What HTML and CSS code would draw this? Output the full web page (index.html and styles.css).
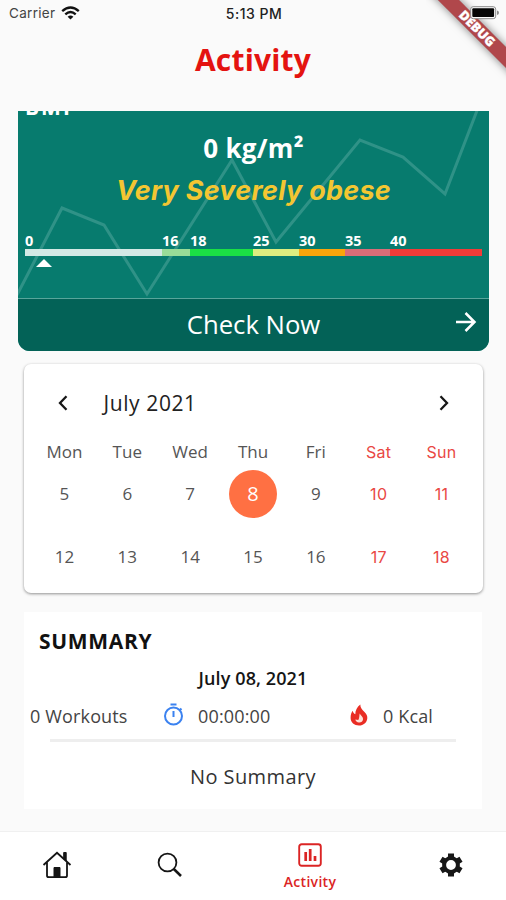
FILE: index.html
```html
<!DOCTYPE html>
<html lang="en">
<head>
<meta charset="utf-8">
<title>Activity</title>
<link rel="stylesheet" href="styles.css">
</head>
<body>
<div class="corner"><div class="debug"><span>DEBUG</span></div></div>
<header class="status">
  <div class="carrier"><span>Carrier</span>
    <svg width="19" height="14" viewBox="0 0 19 14" fill="none" stroke="#111" stroke-width="2.4"><path d="M1.2 5.1Q9.5-2.2 17.8 5.1M4.3 8.3Q9.500 3.800 14.700 8.300"/><path d="M9.500 13.500L6.600 10.700Q9.500 8.300 12.400 10.700Z" fill="#111" stroke="none"/></svg>
  </div>
  <time class="clock">5:13 PM</time>
  <svg class="battery" width="29" height="14" viewBox="0 0 29 14"><rect x=".7" y=".7" width="25" height="12" rx="2.500" fill="#fafafa" stroke="#8b8b8b"/><rect x="2.300" y="2.300" width="21.800" height="8.800" rx="1" fill="#050505"/><path d="M27 4.500q2 .5 2 2.200t-2 2.200z" fill="#8b8b8b"/></svg>
</header>
<h1 class="title"><span>Activity</span></h1>
<main class="content">
  <section class="bmi">
    <svg class="trend" width="471" height="187" viewBox="0 0 471 187" fill="none" stroke="#2f9287" stroke-width="3"><path d="M-1 184L44 97L86 114L129 183L214 49L258 131L342 29L385 46L427 83L460-3"/></svg>
    <div class="bmi-body">
      <div class="bmi-label">BMI</div>
      <div class="bmi-value"><span>0 kg/m²</span></div>
      <div class="bmi-class"><span>Very Severely obese</span></div>
      <div class="scale">
        <div class="seg s0"><b>0</b></div><div class="seg s16"><b>16</b></div><div class="seg s18"><b>18</b></div><div class="seg s25"><b>25</b></div><div class="seg s30"><b>30</b></div><div class="seg s35"><b>35</b></div><div class="seg s40"><b>40</b></div>
      </div>
      <div class="pointer"></div>
    </div>
    <div class="check"><span>Check Now</span>
      <svg class="arrow" width="22" height="22" viewBox="0 0 22 22" fill="none" stroke="#fff" stroke-width="2.500"><path d="M1 11H19.500M10.500 2L19.500 11L10.500 20"/></svg>
    </div>
  </section>
  <section class="calendar">
    <div class="cal-head">
      <svg width="10" height="16" viewBox="0 0 10 16" fill="none" stroke="#171717" stroke-width="2.300"><path d="M8.500 1.300L2 8L8.500 14.700"/></svg>
      <div class="month"><span>July 2021</span></div>
      <svg width="10" height="16" viewBox="0 0 10 16" fill="none" stroke="#171717" stroke-width="2.300"><path d="M1.500 1.300L8 8L1.500 14.700"/></svg>
    </div>
    <div class="week names"><span>Mon</span><span>Tue</span><span>Wed</span><span>Thu</span><span>Fri</span><span class="red">Sat</span><span class="red">Sun</span></div>
    <div class="week first"><span>5</span><span>6</span><span>7</span><span class="today">8</span><span>9</span><span class="red">10</span><span class="red">11</span></div>
    <div class="week second"><span>12</span><span>13</span><span>14</span><span>15</span><span>16</span><span class="red">17</span><span class="red">18</span></div>
  </section>
  <section class="summary">
    <h2><span>SUMMARY</span></h2>
    <div class="date"><span>July 08, 2021</span></div>
    <div class="stats">
      <span class="workouts">0 Workouts</span>
      <svg class="watch" width="21" height="23" viewBox="0 0 21 23" fill="none" stroke="#3b82f0" stroke-width="2"><circle cx="10.500" cy="13" r="8.500"/><path d="M7.500 1.500H13.500M10.500 8V14M17 5.500L18.500 7"/></svg>
      <span class="time">00:00:00</span>
      <svg class="fire" width="18" height="22" viewBox="0 0 18 22"><path d="M10.300.5C10.300 4 12 5.400 14.500 8C16.500 10.200 17.500 12 17.300 14.200C17 18.500 13.500 21.500 9 21.500C4.300 21.500.6 18.400.6 14C.6 11 1.400 8.500 2.600 6.800C3.200 8.800 4 9.900 5.300 10.300C5.300 6.500 7 3 10.300.5Z" fill="#e92d24"/><path d="M9.700 9.200C10 11.200 13.400 12.200 13 15.500C12.700 17.500 11.200 18.500 9 18.400C7 18.300 5.600 17.200 5.400 15.500L8.300 15.900C9.500 14.300 9.200 11.300 9.700 9.200Z" fill="#ffe1d8"/></svg>
      <span class="kcal">0 Kcal</span>
    </div>
    <hr>
    <div class="empty"><span>No Summary</span></div>
  </section>
</main>
<nav class="tabs">
  <svg class="home" width="30" height="28" viewBox="0 0 30 28" fill="none" stroke="#151515" stroke-width="1.800"><path d="M1.500 14L15 1.800L28.500 14M5 11V24.500Q5 26.200 6.700 26.200H23.300Q25 26.200 25 24.500V11"/><path d="M21.700 1.500H24.200V10L21.700 8Z" fill="#151515" stroke-width="1"/><path d="M12 16.500H18V26H12Z" fill="#151515" stroke-width="1"/></svg>
  <svg class="search" width="26" height="26" viewBox="0 0 26 26" fill="none" stroke="#151515"><circle cx="10.500" cy="10.500" r="8.900" stroke-width="1.800"/><path d="M16.800 17L24 24" stroke-width="2.500"/></svg>
  <div class="active">
    <svg width="24" height="24" viewBox="0 0 24 24" fill="none" stroke="#db2424"><rect x="1.200" y="1.200" width="21.600" height="21.600" rx="2.500" stroke-width="1.900"/><path d="M7.700 9V18M12.200 6V18M17 13V18" stroke-width="2.700"/></svg>
    <span>Activity</span>
  </div>
  <svg class="gear" width="24" height="24" viewBox="0 0 24 24" fill="none" stroke="#171717"><circle cx="12" cy="12" r="6.900" stroke-width="4"/><path d="M12 .5V5M12 19V23.500M2 6.200L6 8.600M18 15.400L22 17.800M2 17.800L6 15.400M18 8.600L22 6.200" stroke-width="6"/></svg>
</nav>
</body>
</html>
```
FILE: styles.css
```css
* { box-sizing: border-box; }
body { margin: 0; width: 506px; height: 900px; overflow: hidden; position: relative; display: flex; flex-direction: column; background: #fafafa; color: #222; font-family: "Open Sans", "Noto Sans", sans-serif; white-space: nowrap; }
svg { display: block; flex: none; }
.status { height: 26px; display: grid; grid-template-columns: 1fr auto 1fr; align-items: center; padding: 0 7px 0 9px; font: 13.5px Inter, sans-serif; }
.carrier { display: flex; align-items: center; gap: 6px; color: #444; letter-spacing: .3px; }
.clock { font-weight: 500; font-size: 14px; color: #222; letter-spacing: .5px; }
.battery { justify-self: end; position: relative; z-index: 3; }
.corner { position: absolute; z-index: 2; top: 0; right: 0; width: 80px; height: 80px; overflow: hidden; }
.debug { position: absolute; width: 160px; height: 15px; left: -29px; top: 21px; transform: rotate(45deg); background: #b0474b; box-shadow: 0 0 8px rgba(0,0,0,.5); color: #fff; font: 800 13px/15px "Open Sans", sans-serif; text-align: center; -webkit-text-stroke: .3px #fff; }
.title { margin: 0; height: 85px; padding-top: 13px; text-align: center; color: #e41310; font-weight: 700; font-size: 30px; line-height: 42px; letter-spacing: .2px; }
.content { height: 720px; display: flex; flex-direction: column; }
.bmi { position: relative; flex: none; height: 240px; margin: 0 17px 0 18px; overflow: hidden; border-radius: 0 0 12px 12px; background: #077b6e; color: #fff; }
.trend { position: absolute; left: 0; top: 0; }
.bmi-body { position: relative; display: flow-root; height: 187px; padding: 0 7px; }
.bmi-label { height: 19px; font-weight: 700; font-size: 21px; line-height: 20px; margin-top: -14px; letter-spacing: 2px; }
.bmi-value { height: 42px; padding-top: 13px; text-align: center; font-weight: 700; font-size: 26px; line-height: 38px; letter-spacing: .3px; }
.bmi-class { height: 40px; margin-top: 11px; text-align: center; font: italic 700 27px/43px Inter, sans-serif; letter-spacing: .25px; color: #f3c632; }
.scale { height: 7px; margin-top: 40px; display: flex; }
.seg { position: relative; height: 7px; }
.seg b { position: absolute; left: 0; top: -18px; font-weight: 700; font-size: 14.5px; line-height: 20px; }
.s0 { width: 137px; background: #d3e9e5; } .s16 { width: 28px; background: #98dc98; } .s18 { width: 63px; background: #1be044; } .s25 { width: 46px; background: #dded80; } .s30 { width: 46px; background: #f9a50b; } .s35 { width: 45px; background: #d96d78; } .s40 { flex: 1; background: #f03b38; }
.pointer { width: 0; height: 0; margin: 3px 0 0 11px; border: 8px solid transparent; border-top: 0; border-bottom: 8px solid #fff; }
.check { position: relative; height: 53px; display: flex; align-items: center; justify-content: center; border-top: 1px solid #58a59b; background: #036257; font-size: 25.7px; padding-bottom: 1px; }
.arrow { position: absolute; right: 12px; top: 12px; }
.calendar { flex: none; height: 229px; margin: 13px 23px 0 24px; padding: 0 10px; border-radius: 7px; background: #fff; box-shadow: 0 1px 3px rgba(0,0,0,.42); }
.cal-head { height: 78px; padding: 0 24px; display: flex; align-items: center; font-size: 21px; letter-spacing: .6px; }
.month { flex: 1; padding-left: 35.5px; }
.week { display: grid; grid-template-columns: repeat(7, 1fr); align-items: center; justify-items: center; margin: 0 0 0 -1px; }
.week span { font-size: 17px; color: #555; }
.names { height: 20px; }
.names span { position: relative; top: -2px; }
.first { height: 63px; }
.second { height: 63px; }
.week .red { color: #e94844; font-family: Inter, sans-serif; font-size: 16px; letter-spacing: .3px; }
.week .today { width: 48px; height: 48px; border-radius: 50%; background: #ff7043; color: #fff; line-height: 48px; text-align: center; font-size: 20px; }
.summary { flex: none; height: 197px; margin: 19px 24px 0; background: #fff; }
.summary h2 { margin: 0; padding: 10px 0 0 15px; height: 51px; font-weight: 700; font-size: 21px; line-height: 38px; letter-spacing: .7px; color: #111; }
.date { height: 30px; text-align: center; font-weight: 600; font-size: 18px; line-height: 30px; letter-spacing: .1px; color: #151515; }
.stats { height: 45px; display: flex; align-items: center; padding-left: 6px; font-size: 18px; letter-spacing: .15px; color: #444; }
.workouts { width: 133px; } .time { margin-left: 14px; width: 152px; } .kcal { margin-left: 15px; }
.watch, .fire { position: relative; top: -1px; }
hr { width: 406px; height: 3px; margin: 1px auto 0; border: 0; background: #eee; }
.empty { height: 66px; font-size: 20px; line-height: 69px; letter-spacing: .4px; text-align: center; color: #333; }
.tabs { height: 69px; border-top: 1px solid #f0f0f0; background: #fff; display: flex; align-items: center; padding-left: 42px; }
.home, .gear { position: relative; top: -1px; }
.search { margin-left: 85px; position: relative; top: -1px; }
.active { width: 56px; margin-left: 99px; display: flex; flex-direction: column; align-items: center; color: #db2424; font-weight: 600; font-size: 14px; line-height: 20px; letter-spacing: .3px; gap: 5px; position: relative; top: 1px; }
.gear { margin-left: 101px; }
```
